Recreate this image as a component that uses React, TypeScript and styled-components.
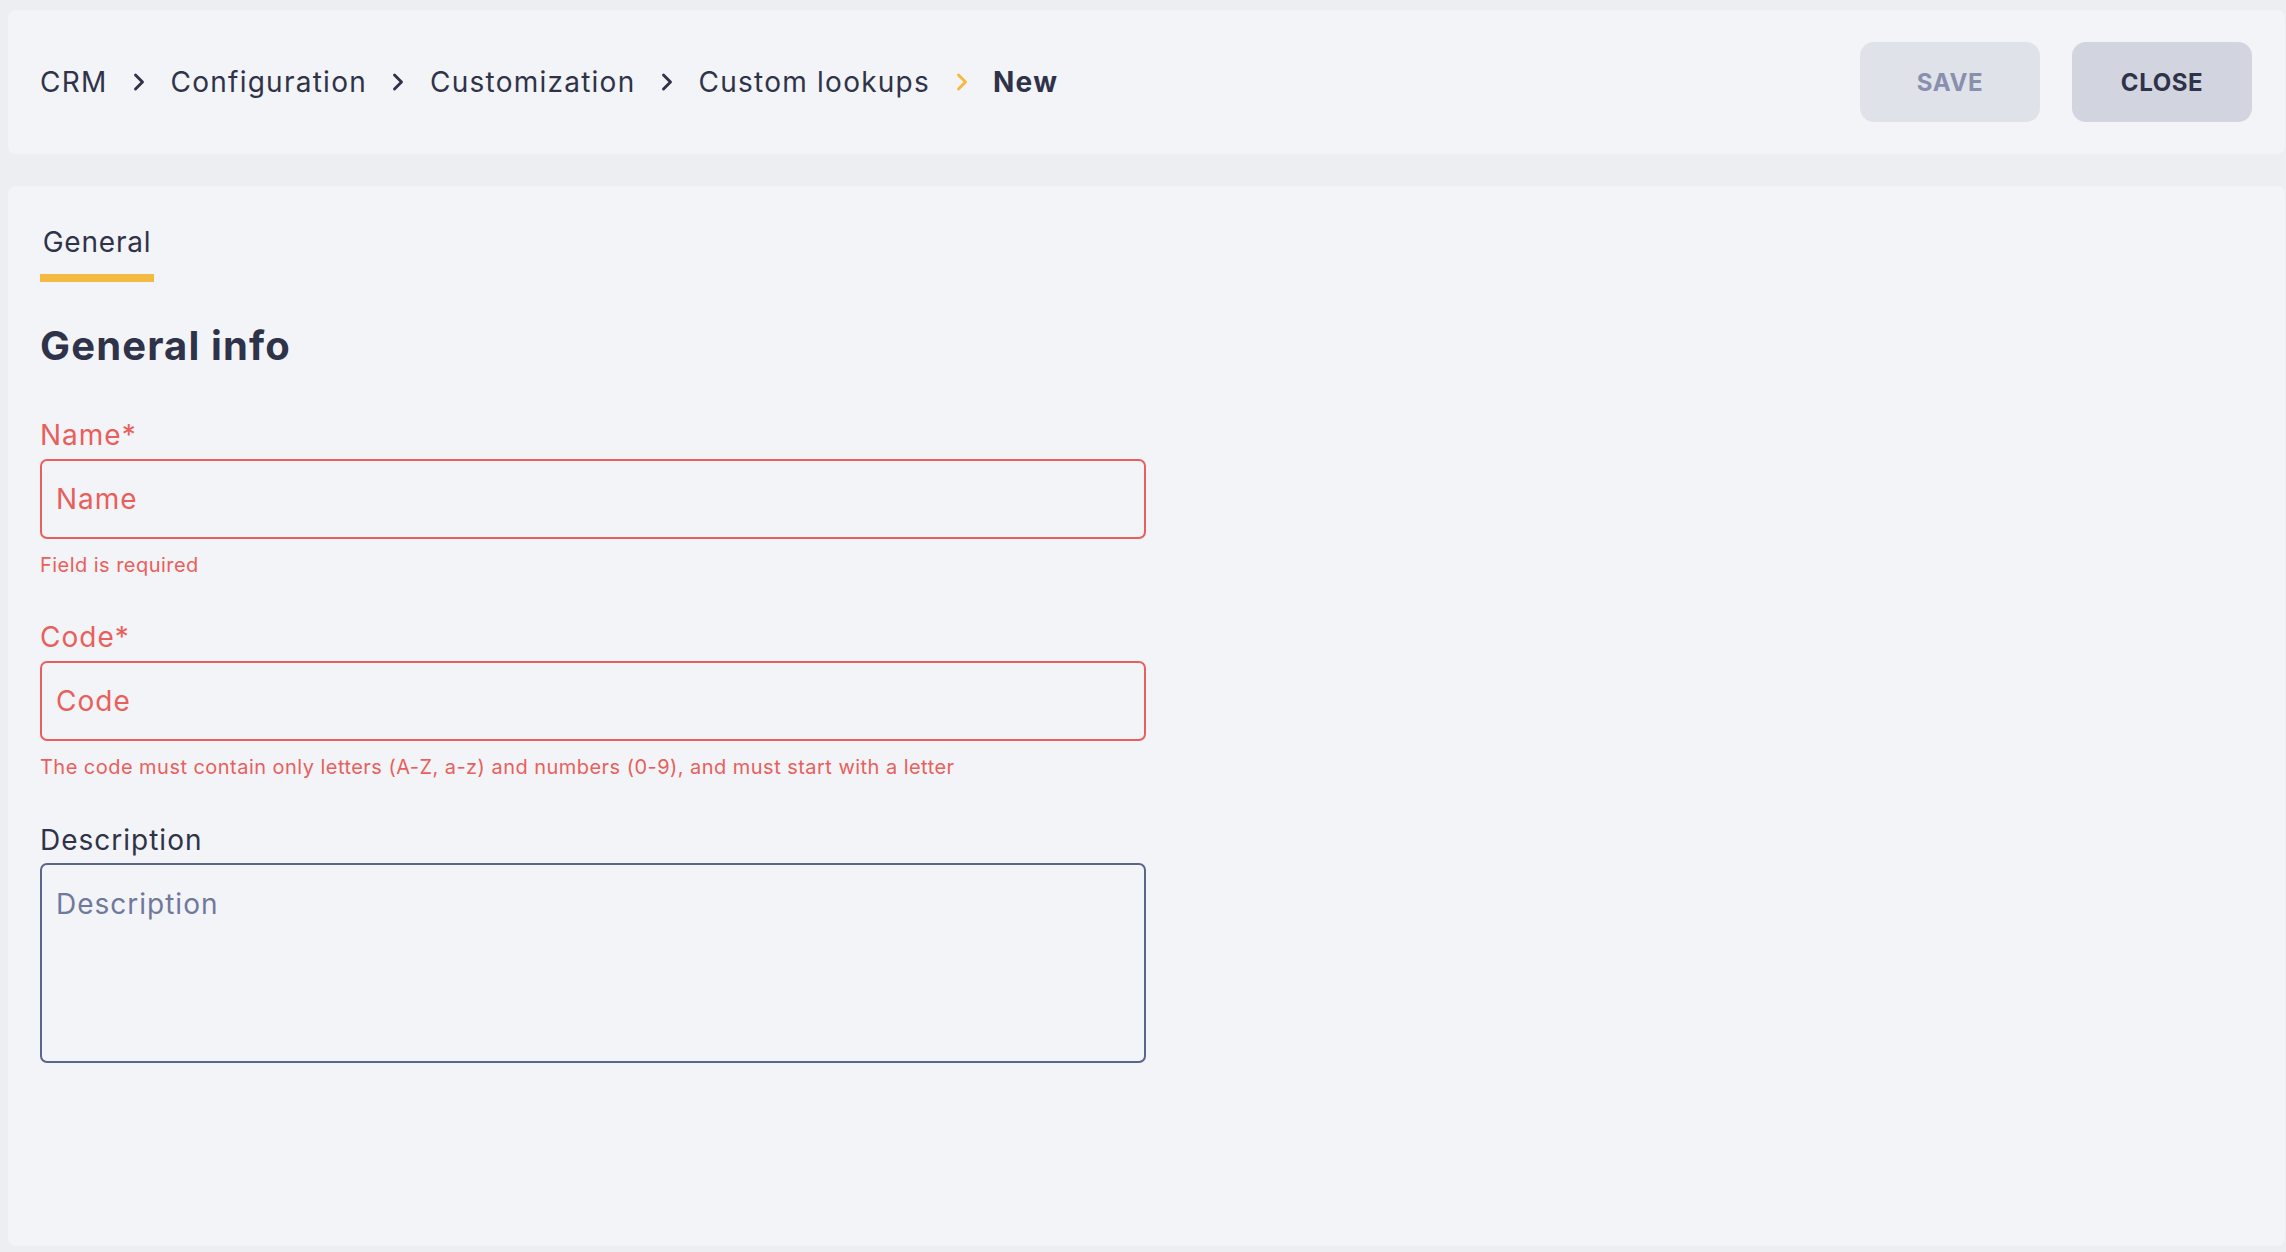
import React from 'react'
import styled, { createGlobalStyle } from 'styled-components'
import { ChevronRight } from 'lucide-react'

const colors = {
  page: '#edeef2',
  panel: '#f3f4f7',
  ink: '#2f3349',
  red: '#e85f5c',
  gold: '#f3b941',
  slate: '#5a6587',
  hint: '#6f799e',
}

const font = `Inter, "Noto Sans", "Liberation Sans", sans-serif`

const GlobalStyle = createGlobalStyle`
  html, body {
    margin: 0;
    padding: 0;
    background: ${colors.page};
  }
  * {
    box-sizing: border-box;
  }
`

const Page = styled.div`
  height: 1252px;
  padding: 10px 1px 6px 8px;
  display: flex;
  flex-direction: column;
  gap: 32px;
  font-family: ${font};
  color: ${colors.ink};
`

const Header = styled.header`
  height: 144px;
  flex: none;
  padding: 0 33px 0 32px;
  display: flex;
  align-items: center;
  justify-content: space-between;
  background: ${colors.panel};
  border-radius: 8px;
`

const Crumbs = styled.nav`
  display: flex;
  align-items: center;
`

const Crumb = styled.span<{ $current?: boolean }>`
  font-size: 28px;
  line-height: 40px;
  letter-spacing: 1.25px;
  font-weight: ${(props) => (props.$current ? 700 : 400)};
  white-space: nowrap;
`

const Separator = styled.span<{ $current?: boolean }>`
  width: 63px;
  display: flex;
  justify-content: center;
  color: ${(props) => (props.$current ? colors.gold : colors.ink)};
`

const Actions = styled.div`
  display: flex;
  gap: 32px;
`

const Button = styled.button<{ $disabled?: boolean }>`
  width: 180px;
  height: 80px;
  border: 0;
  border-radius: 14px;
  font-family: ${font};
  font-size: 24px;
  font-weight: 700;
  letter-spacing: 0.6px;
  color: ${(props) => (props.$disabled ? '#8990ae' : colors.ink)};
  background: ${(props) => (props.$disabled ? '#e0e2e9' : '#d2d4e0')};
`

const Content = styled.main`
  flex: 1;
  padding: 32px 32px 0;
  background: ${colors.panel};
  border-radius: 8px;
`

const Tabs = styled.div`
  display: flex;
`

const Tab = styled.div`
  width: 114px;
  height: 64px;
  padding-top: 1px;
  text-align: center;
  font-size: 28px;
  line-height: 46px;
  letter-spacing: 0.8px;
  border-bottom: 8px solid ${colors.gold};
`

const Title = styled.h2`
  margin: 36px 0 0;
  font-size: 40px;
  line-height: 56px;
  letter-spacing: 1.15px;
  font-weight: 700;
`

const Form = styled.form`
  width: 1106px;
  margin-top: 45px;
  display: flex;
  flex-direction: column;
`

const Field = styled.div`
  height: 203px;
  display: flex;
  flex-direction: column;
  &:first-child {
    height: 202px;
  }
  &:last-child {
    height: auto;
  }
  &:last-child label {
    height: 39px;
  }
`

const Label = styled.label<{ $error?: boolean }>`
  height: 40px;
  flex: none;
  font-size: 28px;
  line-height: 32px;
  letter-spacing: 1px;
  color: ${(props) => (props.$error ? colors.red : colors.ink)};
`

const controlStyles = `
  width: 100%;
  flex: none;
  padding: 0 14px;
  background: transparent;
  border-width: 2px;
  border-style: solid;
  border-radius: 7px;
  font-family: ${font};
  font-size: 28px;
  letter-spacing: 1px;
  outline: none;
`

const Input = styled.input<{ $error?: boolean }>`
  ${controlStyles}
  height: 80px;
  border-color: ${(props) => (props.$error ? colors.red : colors.slate)};
  &::placeholder {
    opacity: 1;
    color: ${(props) => (props.$error ? colors.red : colors.hint)};
  }
`

const TextArea = styled.textarea`
  ${controlStyles}
  display: block;
  height: 200px;
  padding-top: 22px;
  line-height: 34px;
  resize: none;
  border-color: ${colors.slate};
  &::placeholder {
    opacity: 1;
    color: ${colors.hint};
  }
`

const Hint = styled.div`
  margin-top: 12px;
  font-size: 20px;
  line-height: 28px;
  letter-spacing: 0.46px;
  color: ${colors.red};
`

const crumbs = ['CRM', 'Configuration', 'Customization', 'Custom lookups']

export default function App() {
  return (
    <>
      <GlobalStyle />
      <Page>
        <Header>
          <Crumbs>
            {crumbs.map((crumb) => (
              <React.Fragment key={crumb}>
                <Crumb>{crumb}</Crumb>
                <Separator $current={crumb === 'Custom lookups'}>
                  <ChevronRight size={28} strokeWidth={2.5} />
                </Separator>
              </React.Fragment>
            ))}
            <Crumb $current>New</Crumb>
          </Crumbs>
          <Actions>
            <Button type="button" $disabled>SAVE</Button>
            <Button type="button">CLOSE</Button>
          </Actions>
        </Header>
        <Content>
          <Tabs>
            <Tab>General</Tab>
          </Tabs>
          <Title>General info</Title>
          <Form>
            <Field>
              <Label $error>Name*</Label>
              <Input $error placeholder="Name" />
              <Hint>Field is required</Hint>
            </Field>
            <Field>
              <Label $error>Code*</Label>
              <Input $error placeholder="Code" />
              <Hint>The code must contain only letters (A-Z, a-z) and numbers (0-9), and must start with a letter</Hint>
            </Field>
            <Field>
              <Label>Description</Label>
              <TextArea placeholder="Description" />
            </Field>
          </Form>
        </Content>
      </Page>
    </>
  )
}
